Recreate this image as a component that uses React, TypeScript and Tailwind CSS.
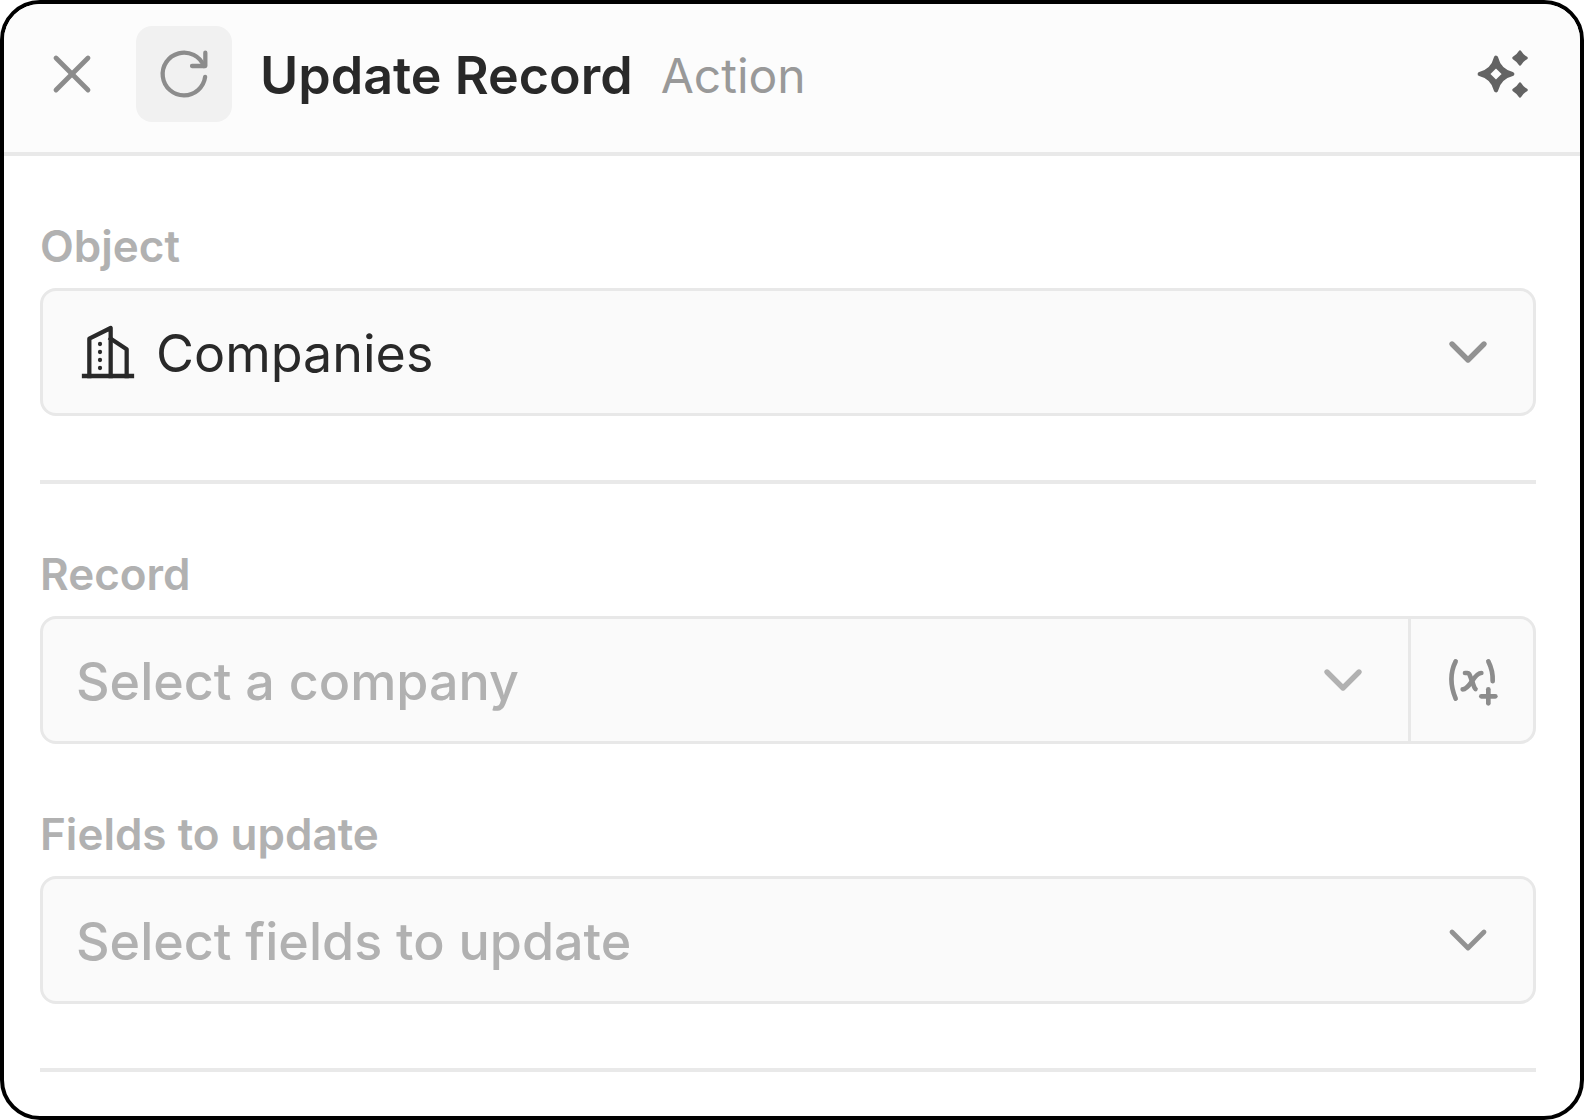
import { useState } from "react";
import type { ReactNode } from "react";
import clsx from "clsx";

type IconProps = {
  className?: string;
  strokeWidth?: number;
  children?: ReactNode;
};

/* ── Icons (24px grid) ───────────────────────────────────── */
function Icon({ className, strokeWidth = 2, children }: IconProps) {
  return (
    <svg
      viewBox="0 0 24 24"
      fill="none"
      stroke="currentColor"
      strokeWidth={strokeWidth}
      strokeLinecap="round"
      strokeLinejoin="round"
      aria-hidden="true"
      className={clsx("shrink-0", className)}
    >
      {children}
    </svg>
  );
}

function CloseIcon() {
  return (
    <Icon className="size-16" strokeWidth={1.8}>
      <path d="M18 6l-12 12" />
      <path d="M6 6l12 12" />
    </Icon>
  );
}

function ReloadIcon() {
  return (
    <Icon className="size-16" strokeWidth={1.6}>
      <path d="M19.933 13.041a8 8 0 1 1 -9.925 -8.788c3.899 -1 7.935 1.007 9.425 4.747" />
      <path d="M20 4v5h-5" />
    </Icon>
  );
}

function SparklesIcon() {
  return (
    <Icon className="size-16" strokeWidth={1.6}>
      <path
        fill="currentColor"
        fillRule="evenodd"
        d="M9 5.9Q10.2 10.8 15.1 12Q10.2 13.2 9 18.1Q7.8 13.2 2.9 12Q7.8 10.8 9 5.9zM9 8.8L5.8 12L9 15.2L12.2 12z"
      />
      <g fill="currentColor" strokeWidth={1}>
        <path d="M18 3.6Q18.9 5.1 20.4 6Q18.9 6.9 18 8.4Q17.1 6.9 15.6 6Q17.1 5.1 18 3.6z" />
        <path d="M18 15.6Q18.9 17.1 20.4 18Q18.9 18.9 18 20.4Q17.1 18.9 15.6 18Q17.1 17.1 18 15.6z" />
      </g>
    </Icon>
  );
}

function BuildingIcon() {
  return (
    <Icon className="size-16" strokeWidth={1.6}>
      <g strokeLinecap="square">
        <path d="M3 21h18" />
        <path d="M5 21v-14l8 -4v18" />
        <path d="M19 21v-10l-6 -4" />
      </g>
      <path d="M9 9v.01" />
      <path d="M9 12v.01" />
      <path d="M9 15v.01" />
      <path d="M9 18v.01" />
    </Icon>
  );
}

function VariablePlusIcon() {
  return (
    <Icon className="size-14">
      <path d="M5 4c-2.5 5 -2.5 10 0 16" />
      <path d="M19 4c1.38 2.76 2 5.52 1.855 8.448" />
      <path d="M9 9h1c1 0 1 1 2.016 3.527c.782 1.966 .943 3 1.478 3.343" />
      <path d="M8 16c1.5 0 3 -2 4 -3.5s2.5 -3.5 4 -3.5" />
      <path d="M16 19h6" />
      <path d="M19 16v6" />
    </Icon>
  );
}

/* ── Select field ────────────────────────────────────────── */
type SelectFieldProps = {
  id: string;
  label: string;
  options: string[];
  placeholder?: string;
  initial?: string;
  icon?: ReactNode;
  chevronClass?: string;
  chevronStroke?: number;
  action?: ReactNode;
};

function SelectField({
  id,
  label,
  options,
  placeholder,
  initial = "",
  icon,
  chevronClass = "text-[#929292]",
  chevronStroke = 2,
  action,
}: SelectFieldProps) {
  const [value, setValue] = useState(initial);

  return (
    <div className="flex flex-col gap-5">
      <label htmlFor={id} className="text-[44px] leading-11 font-semibold text-[#b1b1b1]">
        {label}
      </label>
      <div className="flex h-32 overflow-hidden rounded-2xl border-3 border-[#e8e8e8] bg-[#fafafa]">
        <div className="relative flex flex-1 items-center">
          {icon && (
            <span className="pointer-events-none absolute left-[33px] text-[#292929]">{icon}</span>
          )}
          <select
            id={id}
            value={value}
            onChange={(e) => setValue(e.target.value)}
            className={clsx(
              "h-full w-full appearance-none bg-transparent pt-1 pr-28 text-[52px] outline-none",
              icon ? "pl-[113px]" : "pl-[33px]",
              value ? "text-[#292929]" : "font-medium text-[#b1b1b1]"
            )}
          >
            {placeholder && <option value="">{placeholder}</option>}
            {options.map((option) => (
              <option key={option} value={option}>
                {option}
              </option>
            ))}
          </select>
          <Icon
            className={clsx("pointer-events-none absolute right-[33px] size-16", chevronClass)}
            strokeWidth={chevronStroke}
          >
            <path d="M6 9l6 6l6 -6" />
          </Icon>
        </div>
        {action}
      </div>
    </div>
  );
}

/* ── Main component ──────────────────────────────────────── */
export default function App() {
  return (
    <div className="min-h-screen bg-white font-['Inter',sans-serif]">
      <div className="min-h-screen overflow-hidden rounded-[40px] border-4 border-black bg-white">
        <header className="flex items-center border-b-4 border-[#e9e9e9] bg-[#fcfcfc] pt-[22px] pr-11 pb-[30px] pl-9">
          <button type="button" aria-label="Close" className="text-[#8c8c8c]">
            <CloseIcon />
          </button>
          <span className="ml-8 flex size-24 items-center justify-center rounded-2xl bg-[#f1f1f1] text-[#8c8c8c]">
            <ReloadIcon />
          </span>
          <div className="ml-7 flex items-center gap-7 pt-1">
            <h1 className="text-[52px] leading-16 font-semibold text-[#292929]">Update Record</h1>
            <span className="text-5xl leading-16 text-[#999999]">Action</span>
          </div>
          <button type="button" aria-label="AI suggestions" className="ml-auto text-[#636363]">
            <SparklesIcon />
          </button>
        </header>

        <main className="pr-11 pl-9">
          <section className="border-b-4 border-[#e9e9e9] pt-[68px] pb-16">
            <SelectField
              id="object"
              label="Object"
              options={["Companies"]}
              initial="Companies"
              icon={<BuildingIcon />}
            />
          </section>

          <section className="flex flex-col gap-[68px] border-b-4 border-[#e9e9e9] pt-[68px] pb-16">
            <SelectField
              id="record"
              label="Record"
              options={[]}
              placeholder="Select a company"
              chevronClass="text-[#b1b1b1]"
              action={
                <button
                  type="button"
                  aria-label="Insert variable"
                  className="flex w-[125px] items-center justify-center border-l-3 border-[#e8e8e8] text-[#8c8c8c]"
                >
                  <VariablePlusIcon />
                </button>
              }
            />
            <SelectField
              id="fields"
              label="Fields to update"
              options={[]}
              placeholder="Select fields to update"
              chevronStroke={1.8}
            />
          </section>
        </main>
      </div>
    </div>
  );
}
